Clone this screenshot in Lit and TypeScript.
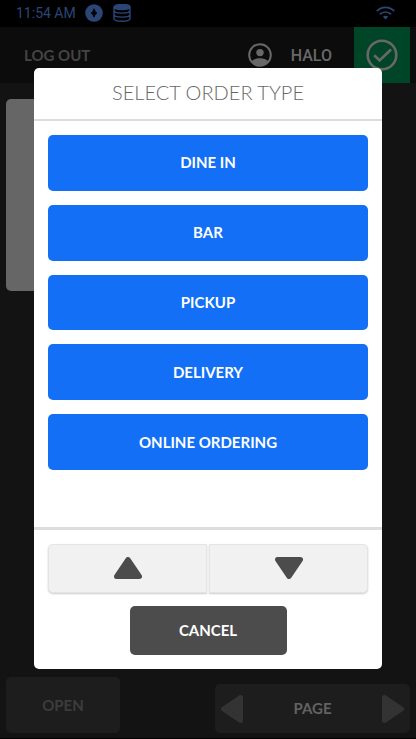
import { LitElement, html, css } from "lit";
import { customElement, state } from "lit/decorators.js";

const ORDER_TYPES = ["DINE IN", "BAR", "PICKUP", "DELIVERY", "ONLINE ORDERING"];

@customElement("app-root")
export class AppRoot extends LitElement {
  @state() private selected = "";

  static styles = css`
    :host {
      display: block;
      position: relative;
      font-family: Lato, "Open Sans", sans-serif;
    }
    * {
      box-sizing: border-box;
    }
    button {
      font: inherit;
      border: 0;
      padding: 0;
      margin: 0;
      background: none;
      color: inherit;
      cursor: pointer;
    }
    svg {
      display: block;
      flex: none;
    }
    .screen {
      display: flex;
      flex-direction: column;
      min-height: 100vh;
      background: #131313;
      border-bottom: 1px solid #000;
      font-size: 15px;
      font-weight: 700;
    }
    .status {
      display: flex;
      align-items: center;
      height: 27px;
      padding: 0 21px 2px 16px;
      background: #000;
      color: #2b4676;
      font-family: Roboto, sans-serif;
      font-size: 14px;
      font-weight: 400;
    }
    .status .disc {
      margin-left: 9px;
    }
    .status .stack {
      margin-left: 10px;
    }
    .status .wifi {
      margin-left: auto;
    }
    .topbar {
      display: flex;
      align-items: center;
      height: 56px;
      padding-right: 6px;
      background: #0c0c0c;
    }
    .logout {
      margin-left: 24px;
      margin-right: auto;
      color: #444;
    }
    .user {
      display: flex;
      align-items: center;
      gap: 19px;
      margin-right: 22px;
      color: #686868;
      font-family: Roboto, sans-serif;
      font-size: 16px;
      font-weight: 500;
    }
    .confirm {
      display: grid;
      place-items: center;
      width: 56px;
      height: 56px;
      background: #004527;
      color: #686868;
    }
    .ticket {
      width: 120px;
      height: 192px;
      margin: 16px 6px;
      border-radius: 5px;
      background: #666;
    }
    .bottom {
      display: flex;
      justify-content: space-between;
      align-items: flex-end;
      margin-top: auto;
      padding: 0 6px 5px;
    }
    .open {
      width: 114px;
      height: 56px;
      border-radius: 5px;
      background: #1d1d1d;
      color: #3c3c3c;
    }
    .pages {
      display: flex;
      align-items: center;
      justify-content: space-between;
      width: 195px;
      height: 49px;
      padding: 0 6px;
      border-radius: 5px;
      background: #1d1d1d;
      color: #626262;
    }
    .pages button {
      color: #333;
    }
    .logout,
    .open,
    .type,
    .cancel,
    .pages span {
      padding-bottom: 1px;
    }
    .overlay {
      position: absolute;
      inset: 0;
      display: flex;
      padding: 68px 34px 70px;
    }
    .dialog {
      display: flex;
      flex-direction: column;
      flex: 1;
      border-radius: 5px;
      background: #fff;
    }
    .title {
      margin: 0;
      height: 53px;
      border-bottom: 2px solid #ddd;
      text-align: center;
      font-size: 20px;
      font-weight: 300;
      line-height: 48px;
      color: #666;
    }
    .types {
      display: grid;
      grid-template-rows: repeat(5, 1fr);
      gap: 14px;
      height: 335px;
      margin: 14px;
    }
    .type {
      border-radius: 5px;
      background: #126ff6;
      color: #fff;
      font-size: 15px;
      font-weight: 700;
    }
    .footer {
      display: flex;
      flex-direction: column;
      align-items: center;
      gap: 13px;
      margin-top: auto;
      padding: 14px;
      border-top: 3px solid #ddd;
    }
    .pager {
      display: flex;
      gap: 2px;
      align-self: stretch;
    }
    .pager button {
      display: grid;
      place-items: center;
      flex: 1;
      height: 49px;
      padding-bottom: 2px;
      border: 1px solid #e4e4e4;
      background: #f1f1f1;
      color: #4c4c4c;
      box-shadow: 0 1px 2px #ccc;
    }
    .pager .prev {
      border-radius: 5px 0 0 5px;
    }
    .pager .next {
      border-radius: 0 5px 5px 0;
    }
    .cancel {
      width: 157px;
      height: 49px;
      border-radius: 5px;
      background: #4c4c4c;
      color: #fff;
      font-size: 15px;
      font-weight: 700;
    }
  `;

  private triangle(points: string, w: number, h: number) {
    return html`<svg width=${w} height=${h} viewBox="0 0 ${w} ${h}" aria-hidden="true">
      <path d=${points} fill="currentColor" stroke="currentColor" stroke-width="5" stroke-linejoin="round" />
    </svg>`;
  }

  render() {
    return html`
      <div class="screen">
        <div class="status">
          <span>11:54 AM</span>
          <svg class="disc" width="18" height="18" viewBox="0 0 18 18" aria-hidden="true">
            <circle cx="9" cy="9" r="8.8" fill="currentColor" />
            <path d="M9 4.800Q9.800 8.200 12 9 9.800 9.800 9 13.200 8.200 9.800 6 9 8.200 8.200 9 4.800Z" fill="#000" stroke="#000" stroke-width=".8" />
          </svg>
          <svg class="stack" width="18" height="18" viewBox="0 0 18 18" fill="none" stroke="currentColor" stroke-width="1.4" aria-hidden="true">
            <ellipse cx="9" cy="3" rx="8" ry="2.6" fill="currentColor" />
            <path d="M1 3V14.5C1 18.2 17 18.2 17 14.5V3M1 6.5C1 10 17 10 17 6.5M1 10.5C1 14 17 14 17 10.5" />
          </svg>
          <svg class="wifi" width="19" height="14" viewBox="0 0 19 14" fill="none" stroke="currentColor" stroke-width="1.7" aria-hidden="true">
            <path d="M.8 5.2C5.6.1 13.4.1 18.2 5.2M3.9 8.4C7 5.2 12 5.2 15.1 8.4" />
            <path d="M6.8 10.7Q9.5 8.9 12.2 10.7L9.5 13.5Z" fill="currentColor" stroke="none" />
          </svg>
        </div>
        <div class="topbar">
          <button class="logout">LOG OUT</button>
          <div class="user">
            <svg width="24" height="24" viewBox="0 0 24 24" aria-hidden="true">
              <circle cx="12" cy="12" r="10.8" fill="none" stroke="currentColor" stroke-width="2" />
              <circle cx="12" cy="9.6" r="3.7" fill="currentColor" />
              <path d="M3.7 18.6C7 14.2 17 14.2 20.3 18.6 16.5 24 7.5 24 3.7 18.6Z" fill="currentColor" />
            </svg>
            <span>HALO</span>
          </div>
          <button class="confirm" aria-label="Confirm">
            <svg width="32" height="32" viewBox="0 0 32 32" fill="none" stroke="currentColor" aria-hidden="true">
              <circle cx="16" cy="16" r="14.3" stroke-width="2.6" />
              <path d="M8.2 16.3 13.6 21.4 25 10.6" stroke-width="2.8" />
            </svg>
          </button>
        </div>
        <div class="ticket"></div>
        <div class="bottom">
          <button class="open">OPEN</button>
          <div class="pages">
            <button aria-label="Previous page">${this.triangle("M2.5 14 19.5 2.5V25.5Z", 22, 28)}</button>
            <span>PAGE</span>
            <button aria-label="Next page">${this.triangle("M19.5 14 2.5 2.5V25.5Z", 22, 28)}</button>
          </div>
        </div>
      </div>
      <div class="overlay">
        <div class="dialog" role="dialog" aria-labelledby="title">
          <h1 class="title" id="title">SELECT ORDER TYPE</h1>
          <div class="types">
            ${ORDER_TYPES.map(
              (t) => html`<button class="type" aria-pressed=${this.selected === t} @click=${() => (this.selected = t)}>${t}</button>`
            )}
          </div>
          <div class="footer">
            <div class="pager">
              <button class="prev" aria-label="Scroll up">${this.triangle("M14 2.5 25.5 19.5H2.5Z", 28, 22)}</button>
              <button class="next" aria-label="Scroll down">${this.triangle("M14 19.5 25.5 2.5H2.5Z", 28, 22)}</button>
            </div>
            <button class="cancel">CANCEL</button>
          </div>
        </div>
      </div>
    `;
  }
}
